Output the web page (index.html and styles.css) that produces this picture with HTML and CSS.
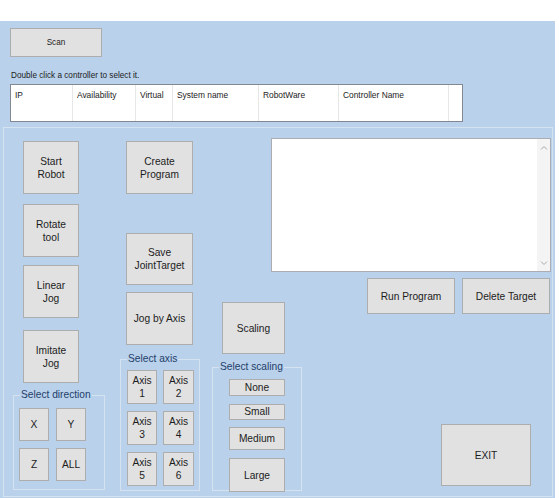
FILE: index.html
```html
<!DOCTYPE html>
<html>
<head>
<meta charset="utf-8">
<title>Robot Controller</title>
<link rel="stylesheet" href="styles.css">
</head>
<body>
<div class="window">
  <div class="top">
    <button class="btn scan">Scan</button>
    <div class="hint">Double click a controller to select it.</div>
    <div class="listview">
      <div class="col c1">IP</div>
      <div class="col c2">Availability</div>
      <div class="col c3">Virtual</div>
      <div class="col c4">System name</div>
      <div class="col c5">RobotWare</div>
      <div class="col c6">Controller Name</div>
    </div>
  </div>

  <div class="panel">
    <div class="colA">
      <button class="btn big start">Start<br>Robot</button>
      <button class="btn big rotate">Rotate<br>tool</button>
      <button class="btn big linear">Linear<br>Jog</button>
      <button class="btn big imitate">Imitate<br>Jog</button>
      <fieldset class="group dir">
        <legend>Select direction</legend>
        <div class="grid2 dirgrid">
          <button class="btn dbtn">X</button>
          <button class="btn dbtn">Y</button>
          <button class="btn dbtn">Z</button>
          <button class="btn dbtn">ALL</button>
        </div>
      </fieldset>
    </div>

    <div class="colB">
      <button class="btn wide create">Create<br>Program</button>
      <button class="btn wide save">Save<br>JointTarget</button>
      <button class="btn wide jog">Jog by Axis</button>
      <fieldset class="group axis">
        <legend>Select axis</legend>
        <div class="axisgrid">
          <button class="btn abtn a1">Axis<br>1</button>
          <button class="btn abtn a2">Axis<br>2</button>
          <button class="btn abtn a1">Axis<br>3</button>
          <button class="btn abtn a2">Axis<br>4</button>
          <button class="btn abtn a1">Axis<br>5</button>
          <button class="btn abtn a2">Axis<br>6</button>
        </div>
      </fieldset>
    </div>

    <div class="right">
      <div class="textbox">
        <div class="scrollbar">
          <svg class="arrow" width="8" height="6" viewBox="0 0 8 6"><path d="M1 4.5 L4 1.5 L7 4.5" fill="none" stroke="#a8a8a8" stroke-width="1"/></svg>
          <svg class="arrow" width="8" height="6" viewBox="0 0 8 6"><path d="M1 1.5 L4 4.5 L7 1.5" fill="none" stroke="#a8a8a8" stroke-width="1"/></svg>
        </div>
      </div>
      <div class="lower">
        <div class="colC">
          <button class="btn scaling">Scaling</button>
          <fieldset class="group scale">
            <legend>Select scaling</legend>
            <button class="btn sbtn none">None</button>
            <button class="btn sbtn small">Small</button>
            <button class="btn sbtn medium">Medium</button>
            <button class="btn sbtn large">Large</button>
          </fieldset>
        </div>
        <div class="colE">
          <div class="runrow">
            <button class="btn act">Run Program</button>
            <button class="btn act">Delete Target</button>
          </div>
          <button class="btn exit">EXIT</button>
        </div>
      </div>
    </div>
  </div>
</div>
</body>
</html>
```
FILE: styles.css
```css
* { box-sizing: border-box; }

body {
  margin: 0;
  background: #ffffff;
  font-family: "Liberation Sans", Arial, sans-serif;
  color: #1c1c1c;
}

.window {
  margin-top: 21px;
  width: 555px;
  height: 477px;
  background: #b9d1ea;
  overflow: hidden;
}

.btn {
  display: block;
  margin: 0;
  padding: 0;
  border: 1px solid #adadad;
  background: #e1e1e1;
  font-family: "Liberation Sans", Arial, sans-serif;
  font-size: 10.2px;
  line-height: 13px;
  color: #1c1c1c;
  text-align: center;
}

/* ---------- top ---------- */
.top {
  padding: 7px 0 0 10px;
}

.scan {
  width: 92px;
  height: 29px;
  font-size: 8.2px;
}

.hint {
  margin: 14px 0 0 1px;
  font-size: 8.2px;
  line-height: 10px;
  height: 10px;
}

.listview {
  margin-top: 3px;
  width: 453px;
  height: 38px;
  border: 1px solid #828790;
  background: #ffffff;
  display: flex;
}

.col {
  height: 100%;
  border-right: 1px solid #e6e6e6;
  padding: 5px 0 0 4px;
  font-size: 8.4px;
  line-height: 10px;
  white-space: nowrap;
}
.c1 { width: 62px; }
.c2 { width: 63px; }
.c3 { width: 37px; }
.c4 { width: 86px; }
.c5 { width: 80px; }
.c6 { width: 110px; }

/* ---------- panel ---------- */
.panel {
  margin: 5px 0 0 3px;
  width: 550px;
  height: 370px;
  border: 1px solid #d5e2ef;
  display: flex;
  align-items: flex-start;
}

.group {
  margin: 0;
  padding: 0;
  border: 1px solid #d5e2ef;
  min-width: 0;
}
.group legend {
  margin-left: 6px;
  padding: 0 1px;
  font-size: 10.2px;
  line-height: 12px;
  color: #23406a;
  white-space: nowrap;
}

/* column A */
.colA {
  margin-left: 9px;
  width: 92px;
  padding-top: 13px;
}
.big {
  margin-left: 10px;
  width: 56px;
  height: 53px;
}
.rotate { margin-top: 10px; }
.linear { margin-top: 8px; }
.imitate { margin-top: 12px; }

.dir {
  margin-top: 6px;
  height: 101px;
}
.grid2 {
  display: grid;
  grid-template-columns: 30px 30px;
  column-gap: 7px;
  row-gap: 7px;
  margin: 7px 0 0 5px;
}
.dbtn {
  width: 30px;
  height: 33px;
}

/* column B */
.colB {
  margin-left: 15px;
  width: 80px;
  padding-top: 13px;
}
.wide {
  margin-left: 6px;
  width: 67px;
  height: 53px;
}
.save { margin-top: 39px; height: 52px; }
.jog { margin-top: 7px; }

.axis {
  margin-top: 8px;
  height: 138px;
}
.axisgrid {
  display: grid;
  grid-template-columns: 30px 31px;
  column-gap: 6px;
  row-gap: 7px;
  margin: 5px 0 0 6px;
}
.abtn {
  height: 34px;
}

/* right region */
.right {
  margin-left: 12px;
  width: 340px;
}
.textbox {
  margin: 10px 0 0 59px;
  width: 280px;
  height: 134px;
  border: 1px solid #abadb3;
  background: #ffffff;
  display: flex;
  justify-content: flex-end;
}
.scrollbar {
  width: 13px;
  height: 100%;
  background: #f4f4f4;
  display: flex;
  flex-direction: column;
  justify-content: space-between;
  align-items: center;
  padding: 6px 0 5px;
}
.arrow { display: block; }

.lower {
  display: flex;
  align-items: flex-start;
}

.colC {
  width: 90px;
  padding-top: 30px;
}
.scaling {
  margin-left: 10px;
  width: 63px;
  height: 52px;
}
.scale {
  margin-top: 7px;
  height: 130px;
}
.sbtn {
  margin-left: 16px;
  width: 56px;
}
.none { margin-top: 6px; height: 17px; line-height: 15px; }
.small { margin-top: 8px; height: 16px; line-height: 14px; }
.medium { margin-top: 7px; height: 23px; }
.large { margin-top: 8px; height: 34px; }

.colE {
  flex: 1;
}
.runrow {
  display: flex;
  gap: 7px;
  margin: 6px 0 0 65px;
}
.act {
  width: 88px;
  height: 36px;
}
.exit {
  margin: 110px 0 0 139px;
  width: 90px;
  height: 62px;
}
```
